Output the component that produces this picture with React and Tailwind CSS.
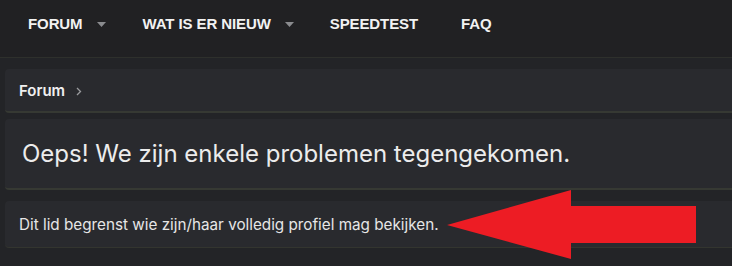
const navItems = [
  { label: "FORUM", caret: true, gap: "mr-[37px]" },
  { label: "WAT IS ER NIEUW", caret: true, gap: "mr-[36px]" },
  { label: "SPEEDTEST", caret: false, gap: "mr-[43px]" },
  { label: "FAQ", caret: false, gap: "" },
];

function Caret() {
  return (
    <svg width="9" height="5" viewBox="0 0 9 5" className="ml-[14px] mt-[1px]">
      <path d="M0 0 H9 L4.5 5 Z" fill="#8a8b8e" />
    </svg>
  );
}

export default function App() {
  return (
    <div
      className="w-[732px] h-[266px] overflow-hidden bg-[#232427] text-[#e8e8e8]"
      style={{ fontFamily: "Inter, 'Liberation Sans', sans-serif" }}
    >
      <nav className="h-[58px] bg-[#212123] border-b border-[#2e302c] flex items-center pl-[28px] pb-[9px]">
        {navItems.map((item) => (
          <div key={item.label} className={`flex items-center ${item.gap}`}>
            <span
              className="text-[15px] font-bold text-[#f2f2f2] tracking-[-0.1px]"
              style={{ fontFamily: "'Liberation Sans', Arial, sans-serif" }}
            >
              {item.label}
            </span>
            {item.caret && <Caret />}
          </div>
        ))}
      </nav>

      <div className="relative pl-[5px] pt-[11px] flex flex-col gap-[6px]">
        <div className="h-[44px] -mr-[10px] rounded-[4px] bg-[#292a2e] border-b-2 border-[#363933] flex items-center pl-[14px] pt-[2px]">
          <span className="text-[15px] font-semibold text-[#f0f0f0]">Forum</span>
          <svg width="6" height="9" viewBox="0 0 6 9" className="ml-[11px]">
            <path d="M1 1 L4.5 4.5 L1 8" stroke="#9a9b9e" strokeWidth="1.3" fill="none" />
          </svg>
        </div>

        <div className="h-[71px] -mr-[10px] rounded-[4px] bg-[#292a2e] border-b-2 border-[#363933] flex items-center pl-[17px]">
          <h1 className="text-[24px] font-normal text-[#ececec]">
            Oeps! We zijn enkele problemen tegengekomen.
          </h1>
        </div>

        <div className="h-[47px] mt-[5px] -mr-[10px] rounded-[4px] bg-[#292a2e] border-b border-[#33352f] flex items-center pl-[14px] pt-[2px]">
          <p className="text-[15.25px] text-[#e6e6e6]">
            Dit lid begrenst wie zijn/haar volledig profiel mag bekijken.
          </p>
        </div>

        <svg
          className="absolute left-0 top-0 pointer-events-none"
          width="732"
          height="208"
          viewBox="0 58 732 208"
        >
          <polygon
            points="447,225 571,190 571,206 696,206 696,243 571,243 571,259"
            fill="#ed1c24"
          />
        </svg>
      </div>
    </div>
  );
}
